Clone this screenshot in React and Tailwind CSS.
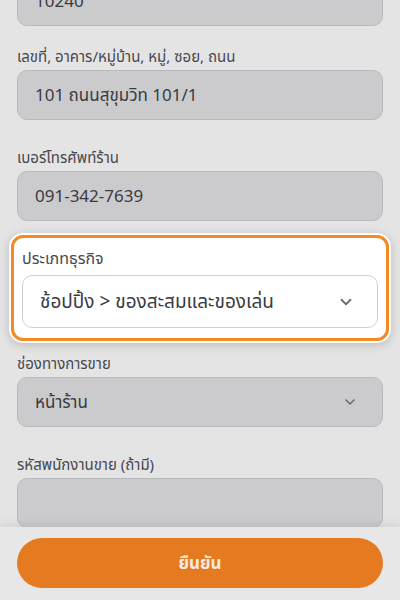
import { ChevronDown } from 'lucide-react';

const fontStack = 'font-["Noto_Sans","Noto_Sans_Thai","DejaVu_Sans",sans-serif]';

const labelClasses = 'block text-[15px] leading-[22px] text-[#48484f] mb-[3px]';
const inputClasses =
  'flex items-center h-[50px] w-full px-[17px] rounded-[10px] bg-[#cbcbce] border border-[#b8b9bd] text-[17px] text-[#3a3a42]';

const Field = ({ label, value, select }) => (
  <div className="mb-[26px]">
    <span className={labelClasses}>{label}</span>
    <div className={`${inputClasses} justify-between`}>
      <span>{value}</span>
      {select && <ChevronDown className="h-[16px] w-[16px] mr-[7px] text-[#6b6b76]" strokeWidth={2.4} />}
    </div>
  </div>
);

export default function App() {
  return (
    <div className={`h-[600px] w-[400px] flex flex-col overflow-hidden bg-[#e4e4e4] ${fontStack}`}>
      <div className="flex-1 overflow-hidden">
        <div className="-mt-[24px] px-[17px]">
          {/* postcode, scrolled half out of view */}
          <div className="mb-[19px]">
            <div className={inputClasses}>
              <span>10240</span>
            </div>
          </div>

          <Field label="เลขที่, อาคาร/หมู่บ้าน, หมู่, ซอย, ถนน" value="101 ถนนสุขุมวิท 101/1" />
          <div className="-mb-[14px]">
            <Field label="เบอร์โทรศัพท์ร้าน" value="091-342-7639" />
          </div>

          {/* highlighted field */}
          <div className="-mx-[8px] mb-[9px] rounded-[14px] bg-white p-[2px] shadow-[0_2px_10px_rgba(0,0,0,0.18)]">
            <div className="rounded-[12px] border-[3px] border-[#f58a25] px-[8px] pt-[8px] pb-[10px]">
              <span className="block text-[16px] leading-[24px] text-[#48484f] mb-[5px]">ประเภทธุรกิจ</span>
              <div className="flex items-center justify-between h-[53px] rounded-[10px] bg-white border border-[#cfcfd4] pl-[17px] pr-[22px]">
                <span className="text-[19px] text-[#3a3a42]">ช้อปปิ้ง &gt; ของสะสมและของเล่น</span>
                <ChevronDown className="h-[18px] w-[18px] text-[#6b6b76]" strokeWidth={2.4} />
              </div>
            </div>
          </div>

          <Field label="ช่องทางการขาย" value="หน้าร้าน" select />
          <div>
            <span className={labelClasses}>รหัสพนักงานขาย (ถ้ามี)</span>
            <div className={inputClasses} />
          </div>
        </div>
      </div>

      <div className="h-[73px] shrink-0 bg-[#e7e7e7] px-[17px] pt-[11px] shadow-[0_-3px_8px_rgba(0,0,0,0.08)]">
        <button className="h-[50px] w-full rounded-full bg-[#e57a20] text-[17px] font-bold text-[#f7eadf]">
          ยืนยัน
        </button>
      </div>
    </div>
  );
}
